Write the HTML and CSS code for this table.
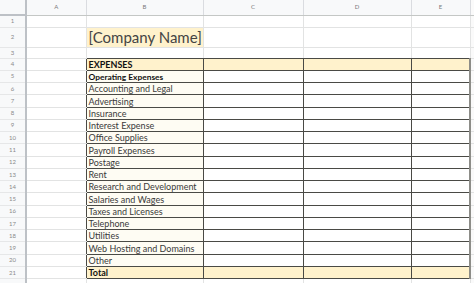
FILE: index.html
```html
<!DOCTYPE html>
<html>
<head>
<meta charset="utf-8">
<link rel="stylesheet" href="styles.css">
</head>
<body>
<table class="sheet">
  <colgroup>
    <col class="c-rh"><col class="c-a"><col class="c-b"><col class="c-c"><col class="c-d"><col class="c-e"><col class="c-x">
  </colgroup>
  <tr class="hdr">
    <td class="corner"></td><td class="ch">A</td><td class="ch">B</td><td class="ch">C</td><td class="ch">D</td><td class="ch">E</td><td class="ch edge"></td>
  </tr>
  <tr class="r1">
    <td class="rh">1</td><td></td><td></td><td></td><td></td><td></td><td class="edge"></td>
  </tr>
  <tr class="r2">
    <td class="rh">2</td><td></td><td class="title">[Company Name]</td><td></td><td></td><td></td><td class="edge"></td>
  </tr>
  <tr class="r3">
    <td class="rh">3</td><td></td><td class="above"></td><td class="above"></td><td class="above"></td><td class="above"></td><td class="edge"></td>
  </tr>
  <tr class="rt">
    <td class="rh">4</td><td class="left"></td><td class="t hl head">EXPENSES</td><td class="t hl"></td><td class="t hl"></td><td class="t hl last"></td><td class="edge"></td>
  </tr>
  <tr class="rt">
    <td class="rh">5</td><td class="left"></td><td class="t lab sub">Operating Expenses</td><td class="t"></td><td class="t"></td><td class="t last"></td><td class="edge"></td>
  </tr>
  <tr class="rt">
    <td class="rh">6</td><td class="left"></td><td class="t lab">Accounting and Legal</td><td class="t"></td><td class="t"></td><td class="t last"></td><td class="edge"></td>
  </tr>
  <tr class="rt">
    <td class="rh">7</td><td class="left"></td><td class="t lab">Advertising</td><td class="t"></td><td class="t"></td><td class="t last"></td><td class="edge"></td>
  </tr>
  <tr class="rt">
    <td class="rh">8</td><td class="left"></td><td class="t lab">Insurance</td><td class="t"></td><td class="t"></td><td class="t last"></td><td class="edge"></td>
  </tr>
  <tr class="rt">
    <td class="rh">9</td><td class="left"></td><td class="t lab">Interest Expense</td><td class="t"></td><td class="t"></td><td class="t last"></td><td class="edge"></td>
  </tr>
  <tr class="rt">
    <td class="rh">10</td><td class="left"></td><td class="t lab">Office Supplies</td><td class="t"></td><td class="t"></td><td class="t last"></td><td class="edge"></td>
  </tr>
  <tr class="rt">
    <td class="rh">11</td><td class="left"></td><td class="t lab">Payroll Expenses</td><td class="t"></td><td class="t"></td><td class="t last"></td><td class="edge"></td>
  </tr>
  <tr class="rt">
    <td class="rh">12</td><td class="left"></td><td class="t lab">Postage</td><td class="t"></td><td class="t"></td><td class="t last"></td><td class="edge"></td>
  </tr>
  <tr class="rt">
    <td class="rh">13</td><td class="left"></td><td class="t lab">Rent</td><td class="t"></td><td class="t"></td><td class="t last"></td><td class="edge"></td>
  </tr>
  <tr class="rt">
    <td class="rh">14</td><td class="left"></td><td class="t lab">Research and Development</td><td class="t"></td><td class="t"></td><td class="t last"></td><td class="edge"></td>
  </tr>
  <tr class="rt">
    <td class="rh">15</td><td class="left"></td><td class="t lab">Salaries and Wages</td><td class="t"></td><td class="t"></td><td class="t last"></td><td class="edge"></td>
  </tr>
  <tr class="rt">
    <td class="rh">16</td><td class="left"></td><td class="t lab">Taxes and Licenses</td><td class="t"></td><td class="t"></td><td class="t last"></td><td class="edge"></td>
  </tr>
  <tr class="rt">
    <td class="rh">17</td><td class="left"></td><td class="t lab">Telephone</td><td class="t"></td><td class="t"></td><td class="t last"></td><td class="edge"></td>
  </tr>
  <tr class="rt">
    <td class="rh">18</td><td class="left"></td><td class="t lab">Utilities</td><td class="t"></td><td class="t"></td><td class="t last"></td><td class="edge"></td>
  </tr>
  <tr class="rt">
    <td class="rh">19</td><td class="left"></td><td class="t lab">Web Hosting and Domains</td><td class="t"></td><td class="t"></td><td class="t last"></td><td class="edge"></td>
  </tr>
  <tr class="rt">
    <td class="rh">20</td><td class="left"></td><td class="t lab">Other</td><td class="t"></td><td class="t"></td><td class="t last"></td><td class="edge"></td>
  </tr>
  <tr class="rt">
    <td class="rh">21</td><td class="left"></td><td class="t hl head total">Total</td><td class="t hl"></td><td class="t hl"></td><td class="t hl last"></td><td class="edge"></td>
  </tr>
  <tr class="r22">
    <td class="rh"></td><td></td><td></td><td></td><td></td><td></td><td class="edge"></td>
  </tr>
</table>
</body>
</html>
```

FILE: styles.css
```css
html, body {
  margin: 0;
  padding: 0;
  background: #ffffff;
  overflow: hidden;
}

.sheet {
  border-collapse: collapse;
  table-layout: fixed;
  width: 474px;
  font-family: Lato, "Noto Sans", sans-serif;
  color: #2a2a2a;
}

.c-rh { width: 26px; }
.c-a { width: 60px; }
.c-b { width: 117px; }
.c-c { width: 100px; }
.c-d { width: 108px; }
.c-e { width: 59px; }
.c-x { width: 4px; }

.sheet td {
  padding: 0;
  border: 1px solid #e2e3e3;
  line-height: 1;
  font-size: 9px;
  white-space: nowrap;
  overflow: hidden;
}

.hdr { height: 15px; }
.r1 { height: 12px; }
.r2 { height: 20px; }
.r3 { height: 11px; }
.rt { height: 12.28px; }
.r22 { height: 8px; }

.sheet .hdr td {
  background: #f8f9fa;
  border-top: none;
  border-bottom: 1px solid #c4c7c5;
  border-left: 1px solid #dadce0;
  border-right: 1px solid #dadce0;
  color: #7a7a7a;
  font-size: 6px;
  text-align: center;
  vertical-align: middle;
}

.sheet .hdr td.corner {
  border-left: none;
  border-right: 2px solid #bdc1c6;
  border-bottom: 2px solid #bdc1c6;
}

.sheet td.rh {
  background: #f8f9fa;
  border-left: none;
  border-right: 2px solid #bdc1c6;
  border-top: 1px solid #e6e7e8;
  border-bottom: 1px solid #e6e7e8;
  color: #8a8a8a;
  font-size: 6px;
  text-align: center;
  vertical-align: middle;
}

.sheet td.edge {
  border-right: none;
  background: #fafafa;
}

.sheet td.title {
  background: #fff2cc;
  font-size: 15px;
  font-weight: 400;
  color: #444444;
  padding-left: 2px;
  vertical-align: middle;
  overflow: visible;
}

.sheet td.above {
  border-bottom: 1px solid #4a4a45;
}

.sheet td.left {
  border-right: 1px solid #4a4a45;
}

.sheet td.t {
  border: 1px solid #4a4a45;
  vertical-align: bottom;
}

.sheet td.t.last {
  border-right: 2px solid #8d8d88;
}

.sheet td.lab {
  background: #fefcf3;
  padding: 0 0 1px 2px;
  font-size: 9px;
  color: #3a3a3a;
}

.sheet td.sub {
  font-weight: 700;
  font-size: 8.4px;
  color: #111111;
}

.sheet td.hl {
  background: #fff2cc;
}

.sheet td.head {
  font-weight: 700;
  font-size: 9px;
  color: #111111;
  padding: 0 0 1px 2px;
}
```
